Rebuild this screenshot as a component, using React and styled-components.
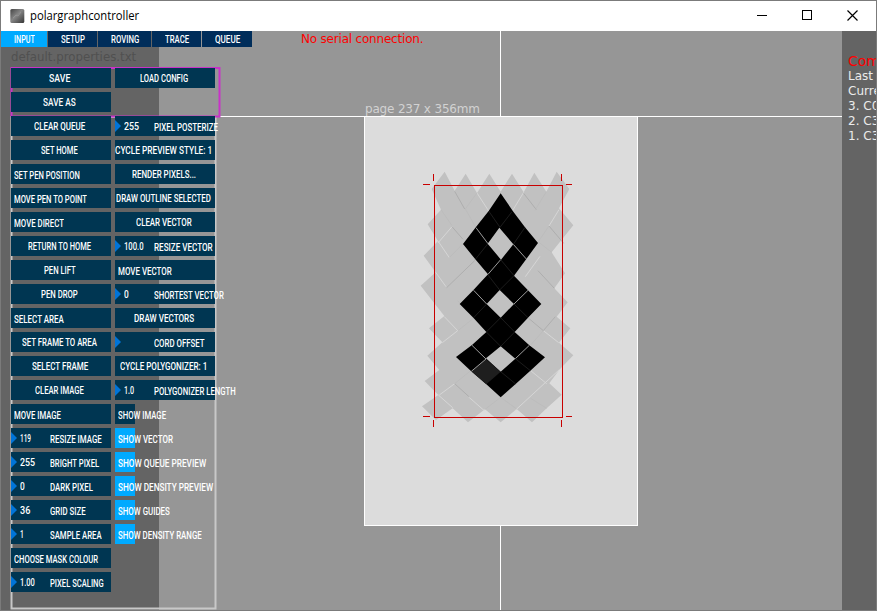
import React, { useLayoutEffect, useRef, useState } from "react";
import styled, { createGlobalStyle } from "styled-components";

const Global = createGlobalStyle`
  * { box-sizing: border-box; }
  body { margin: 0; background: #969696; overflow: hidden; }
`;

const Window = styled.div`
  display: flex;
  flex-direction: column;
  width: 877px;
  height: 611px;
  border: 1px solid #7b7b7b;
  overflow: hidden;
  font-family: "DejaVu Sans", sans-serif;
`;

const TitleBar = styled.header`
  display: flex;
  align-items: center;
  flex: none;
  height: 30px;
  padding-left: 9px;
  background: #fff;
`;

const Title = styled.div`
  flex: 1;
  margin-left: 5px;
  font: 12.5px/30px "Open Sans", sans-serif;
  color: #000;
`;

const WindowButtons = styled.div`
  display: flex;
  gap: 34px;
  margin: 0 18px 1px 0;
`;

const Body = styled.main`
  position: relative;
  display: flex;
  flex: 1;
  min-height: 0;
  background: #969696;
`;

const MachineArea = styled.div`
  width: 158px;
  flex: none;
  background: #646464;
`;

const Canvas = styled.section`
  flex: 1;
  min-width: 0;
`;

const Sidebar = styled.aside`
  width: 34px;
  flex: none;
  overflow: hidden;
  padding: 23px 0 0 6px;
  background: #646464;
  color: #ebebeb;
  font-size: 12px;
  line-height: 15px;
  white-space: nowrap;
`;

const SidebarHeading = styled.div`
  font-size: 14px;
  line-height: 15px;
  color: #f00;
`;

const Overlay = styled.div`
  position: absolute;
  inset: 0;
  pointer-events: none;
`;

const Scene = styled.svg`
  display: block;
  width: 875px;
  height: 579px;
`;

const Controls = styled.div`
  position: absolute;
  inset: 0 auto auto 0;
  display: flex;
  flex-direction: column;
  color: #fff;
  font: 500 10px/14px Roboto, sans-serif;
`;

const Tabs = styled.nav`
  display: flex;
  gap: 1px;
`;

const Tab = styled.button`
  display: flex;
  align-items: center;
  justify-content: center;
  width: ${(p) => p.$width}px;
  height: 16px;
  padding: 1px 0 0;
  border: 0;
  background: ${(p) => (p.$active ? "#00aaff" : "#002d5a")};
  color: #fff;
  font: inherit;
`;

const FileName = styled.div`
  height: 21px;
  padding: 0 0 0 10px;
  color: #505050;
  font: 13px/19px "DejaVu Sans", sans-serif;
`;

const Columns = styled.div`
  display: flex;
  gap: 4px;
  padding-left: 10px;
`;

const Column = styled.div`
  display: flex;
  flex-direction: column;
  gap: 4px;
  width: 100px;
`;

const ButtonBox = styled.div`
  display: flex;
  align-items: center;
  justify-content: ${(p) => (p.$left ? "flex-start" : "center")};
  height: 20px;
  padding: ${(p) => (p.$left ? "3px 0 0 3.4px" : "1px 3px 0 0")};
  background: #003652;
`;

const NumberBox = styled.div`
  display: grid;
  grid-template-columns: 9.4px 30px auto;
  height: 20px;
  background: #003652;
`;

const Marker = styled.svg`
  width: 6px;
  height: 20px;
`;

const NumberValue = styled.span`
  padding-top: 3.5px;
`;

const NumberLabel = styled.span`
  padding-top: 4.5px;
`;

const ToggleBox = styled.div`
  display: flex;
  align-items: center;
  width: 20px;
  height: 20px;
  padding: 3px 0 0 3.4px;
  background: ${(p) => (p.$on ? "#00aaff" : "#003652")};
`;

const Spacer = styled.div`
  height: 20px;
`;

const FitOuter = styled.span`
  display: inline-block;
  flex: none;
  width: ${(p) => p.$width}px;
  white-space: nowrap;
`;

const FitInner = styled.span`
  display: inline-block;
  transform-origin: 0 50%;
`;

/* Condenses its text horizontally to the given width. */
function Fit({ w, children }) {
  const ref = useRef(null);
  const [scale, setScale] = useState(1);
  useLayoutEffect(() => {
    setScale(w / ref.current.offsetWidth);
  }, [w, children]);
  return (
    <FitOuter $width={w}>
      <FitInner ref={ref} style={{ transform: `scaleX(${scale})` }}>
        {children}
      </FitInner>
    </FitOuter>
  );
}

const tabs = [
  ["INPUT", 46, 21],
  ["SETUP", 49, 24],
  ["ROVING", 53, 28],
  ["TRACE", 49, 24],
  ["QUEUE", 50, 25],
];

const leftColumn = [
  { t: "SAVE", w: 21 },
  { t: "SAVE AS", w: 33 },
  { t: "CLEAR QUEUE", w: 51 },
  { t: "SET HOME", w: 37 },
  { t: "SET PEN POSITION", w: 66, left: true },
  { t: "MOVE PEN TO POINT", w: 73, left: true },
  { t: "MOVE DIRECT", w: 50, left: true },
  { t: "RETURN TO HOME", w: 63 },
  { t: "PEN LIFT", w: 32 },
  { t: "PEN DROP", w: 37 },
  { t: "SELECT AREA", w: 50, left: true },
  { t: "SET FRAME TO AREA", w: 75 },
  { t: "SELECT FRAME", w: 56 },
  { t: "CLEAR IMAGE", w: 49 },
  { t: "MOVE IMAGE", w: 47, left: true },
  { t: "RESIZE IMAGE", w: 52, value: "119", vw: 11 },
  { t: "BRIGHT PIXEL", w: 49, value: "255", vw: 15 },
  { t: "DARK PIXEL", w: 43, value: "0", vw: 5 },
  { t: "GRID SIZE", w: 36, value: "36", vw: 10 },
  { t: "SAMPLE AREA", w: 52, value: "1", vw: 4 },
  { t: "CHOOSE MASK COLOUR", w: 84, left: true },
  { t: "PIXEL SCALING", w: 54, value: "1.00", vw: 15 },
];

const rightColumn = [
  { t: "LOAD CONFIG", w: 48 },
  null,
  { t: "PIXEL POSTERIZE", w: 64, value: "255", vw: 15 },
  { t: "CYCLE PREVIEW STYLE: 1", w: 97 },
  { t: "RENDER PIXELS...", w: 64 },
  { t: "DRAW OUTLINE SELECTED", w: 95 },
  { t: "CLEAR VECTOR", w: 56 },
  { t: "RESIZE VECTOR", w: 59, value: "100.0", vw: 20 },
  { t: "MOVE VECTOR", w: 54, left: true },
  { t: "SHORTEST VECTOR", w: 70, value: "0", vw: 5 },
  { t: "DRAW VECTORS", w: 60 },
  { t: "CORD OFFSET", w: 51, value: "", vw: 0 },
  { t: "CYCLE POLYGONIZER: 1", w: 87 },
  { t: "POLYGONIZER LENGTH", w: 82, value: "1.0", vw: 10 },
  { t: "SHOW IMAGE", w: 48, toggle: "off" },
  { t: "SHOW VECTOR", w: 55, toggle: "on" },
  { t: "SHOW QUEUE PREVIEW", w: 88, toggle: "on" },
  { t: "SHOW DENSITY PREVIEW", w: 95, toggle: "on" },
  { t: "SHOW GUIDES", w: 52, toggle: "on" },
  { t: "SHOW DENSITY RANGE", w: 84, toggle: "on" },
];

function Control({ item }) {
  if (!item) return <Spacer />;
  if (item.toggle) {
    return (
      <ToggleBox $on={item.toggle === "on"}>
        <Fit w={item.w}>{item.t}</Fit>
      </ToggleBox>
    );
  }
  if (item.value !== undefined) {
    return (
      <NumberBox>
        <Marker viewBox="0 0 6 20">
          <path d="M0 4L6 10L0 16Z" fill="#0074d9" />
        </Marker>
        <NumberValue>{item.value && <Fit w={item.vw}>{item.value}</Fit>}</NumberValue>
        <NumberLabel>
          <Fit w={item.w}>{item.t}</Fit>
        </NumberLabel>
      </NumberBox>
    );
  }
  return (
    <ButtonBox $left={item.left}>
      <Fit w={item.w}>{item.t}</Fit>
    </ButtonBox>
  );
}

/* Vector artwork, drawn in thirds of a pixel. */
function Artwork() {
  return (
    <g transform="translate(410 165) scale(.33333)">
      <path
        fill="#c1c1c1"
        d="M104 20L134 77L167 26L201 84L238 26L272 80L306 26L341 82L373 23L409 80L440 20L478 72L447 130L490 181L425 262L465 325L433 370L473 412L440 455L481 490L447 533L490 571L448 614L418 655L455 689L410 730L366 772L320 732L272 772L225 733L174 772L128 730L78 765L36 724L85 690L44 648L88 615L52 572L97 532L57 490L103 453L32 362L77 322L41 272L84 228L53 178L93 134L65 72Z"
      />
      <g fill="none" stroke="#d6d6d6" strokeWidth="3">
        <path d="M201 84L236 138M341 82L307 138M447 134L417 183M84 228L118 278M126 185L84 234M103 455L143 497L97 533M400 497L446 533M77 322L108 365M390 274L346 335M85 690L128 728M175 695L224 738M88 690L134 656M362 617L410 656M448 614L317 735M393 417L354 458" />
      </g>
      <g fill="none" stroke="#aaa" strokeWidth="2.5">
        <path d="M134 79L164 132M341 85L379 134M126 185L159 223M194 287L110 368M384 317L433 370M417 183L461 235M436 455L400 497L356 460M134 656L178 696" />
      </g>
      <g fill="none" stroke="#b9b9b9" strokeWidth="2">
        <path d="M201 84L166 132L198 188M93 134L126 182M409 80L375 136M118 278L160 235M425 262L387 232M417 183L382 234M190 458L143 407M190 460L144 497M400 497L362 540M225 733L272 697L320 732M182 617L134 656M362 700L410 730" />
      </g>
      <path
        fillRule="evenodd"
        fill="#000"
        d="M272 85L310 140L345 187L384 234L349 282L312 332L354 376L394 417L354 458L314 501L358 541L405 577L361 617L317 657L272 697L229 658L182 617L138 576L186 540L229 501L190 458L149 417L191 374L234 328L196 283L159 237L198 186L236 138ZM268 188L310 238L273 284L233 236ZM269 375L312 417L272 458L230 417ZM272 544L316 581L272 620L228 580Z"
      />
      <path fill="#1e1e1e" d="M228 583L272 620L229 658L184 619Z" />
      <path
        stroke="#bbb"
        strokeWidth="2.5"
        fill="none"
        d="M198 188L234 236M310 238L349 282M191 376L230 417M354 376L312 417M186 541L228 582L184 619M358 541L316 581M234 328L272 284"
      />
      <path
        stroke="#3c3c3c"
        strokeWidth="1.4"
        fill="none"
        d="M236 138L270 187L306 140M310 238L345 187M196 283L233 237M272 284L312 332L269 375L234 330M191 458L230 417M354 458L312 417M229 501L272 458L314 501L272 544L229 501M361 617L316 581M272 620L317 657"
      />
    </g>
  );
}

/* Everything drawn on the plotting surface, in window coordinates. */
function Surface() {
  return (
    <Scene viewBox="1 31 875 579">
      <path d="M500.5 31V116M500.5 526V610M217 116.5H842" stroke="#fff" />
      <text x="365" y="113" fontSize="12" fill="#d2d2d2" textLength="115" fontFamily="DejaVu Sans">
        page 237 x 356mm
      </text>
      <rect x="364.5" y="116.5" width="273" height="409" fill="#dcdcdc" stroke="#fff" />
      <Artwork />
      <rect x="434.5" y="185.5" width="128" height="232" fill="none" stroke="#c80000" />
      <path
        fill="none"
        stroke="#c80000"
        d="M423 184.5H430M566 184.5H572M423 416.5H430M566 416.5H572M433.5 174V181M561.5 174V181M433.5 420V427M561.5 420V427"
      />
      <text x="301" y="43" fontSize="12" fill="#f00" textLength="122.5" fontFamily="DejaVu Sans">
        No serial connection.
      </text>
      <rect x="11.5" y="117" width="204" height="491.5" fill="none" stroke="#c8c8c8" strokeWidth="2" />
      <rect x="11.5" y="68" width="208" height="48.5" fill="none" stroke="#c832c8" strokeWidth="2" />
    </Scene>
  );
}

export default function App() {
  return (
    <Window>
      <Global />
      <TitleBar>
        <svg width="15" height="15" viewBox="0 0 15 15">
          <defs>
            <linearGradient id="appIcon" x1="0" y1="0" x2="1" y2="1">
              <stop offset="0" stopColor="#444" />
              <stop offset=".45" stopColor="#858585" />
              <stop offset="1" stopColor="#353535" />
            </linearGradient>
          </defs>
          <rect width="14" height="14" x=".3" y="0" rx="1.5" fill="url(#appIcon)" />
          <path d="M3 9L6 6L8 7L11 3" stroke="#999" strokeWidth=".7" fill="none" />
        </svg>
        <Title>
          <Fit w={109}>polargraphcontroller</Fit>
        </Title>
        <WindowButtons>
          <svg width="11" height="11" stroke="#000" fill="none">
            <path d="M0 5.5H10" />
          </svg>
          <svg width="11" height="11" stroke="#000" fill="none">
            <rect x=".5" y=".5" width="9" height="9" />
          </svg>
          <svg width="11" height="11" stroke="#000" fill="none">
            <path d="M.5 .5L10.5 10.5M10.5 .5L.5 10.5" strokeWidth="1.2" />
          </svg>
        </WindowButtons>
      </TitleBar>
      <Body>
        <MachineArea />
        <Canvas />
        <Sidebar>
          <SidebarHeading>Com</SidebarHeading>
          <div>Last c</div>
          <div>Curre</div>
          <div>3. C0</div>
          <div>2. C3</div>
          <div>1. C3</div>
        </Sidebar>
        <Overlay>
          <Surface />
        </Overlay>
        <Controls>
          <Tabs>
            {tabs.map(([name, width, w], i) => (
              <Tab key={name} $width={width} $active={i === 0}>
                <Fit w={w}>{name}</Fit>
              </Tab>
            ))}
          </Tabs>
          <FileName>
            <Fit w={125}>default.properties.txt</Fit>
          </FileName>
          <Columns>
            <Column>
              {leftColumn.map((item, i) => (
                <Control key={i} item={item} />
              ))}
            </Column>
            <Column>
              {rightColumn.map((item, i) => (
                <Control key={i} item={item} />
              ))}
            </Column>
          </Columns>
        </Controls>
      </Body>
    </Window>
  );
}
